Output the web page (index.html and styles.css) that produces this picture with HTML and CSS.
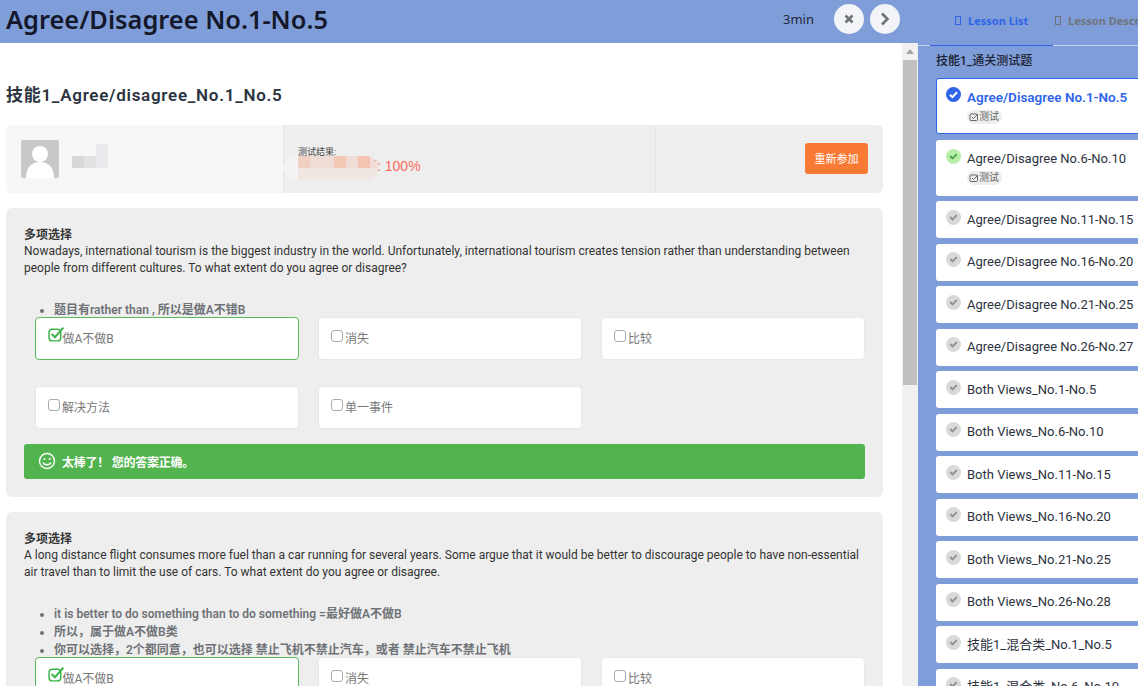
FILE: index.html
```html
<!DOCTYPE html>
<html lang="zh">
<head>
<meta charset="utf-8">
<title>Agree/Disagree No.1-No.5</title>
<link rel="stylesheet" href="styles.css">
</head>
<body>
<div class="app">
  <section class="left">
    <header class="topbar">
      <h1 class="page-title">Agree/Disagree No.1-No.5</h1>
      <span class="timer">3min</span>
      <button class="round-btn"><svg viewBox="0 0 12 12" width="12" height="12"><path d="M2.5 2.5l7 7M9.5 2.5l-7 7" stroke="#6f7378" stroke-width="2.6" fill="none"/></svg></button>
      <button class="round-btn next"><svg viewBox="0 0 12 14" width="12" height="14"><path d="M3 1.5l5.5 5.5L3 12.5" stroke="#6f7378" stroke-width="2.6" fill="none"/></svg></button>
    </header>
    <div class="content-wrap">
      <main class="content">
        <h2 class="lesson-title">技能1_Agree/disagree_No.1_No.5</h2>
        <div class="result">
          <div class="result-user">
            <div class="avatar"><svg viewBox="0 0 38 38" width="38" height="38"><rect width="38" height="38" rx="2" fill="#c8c8c8"/><circle cx="19" cy="14" r="8" fill="#fff"/><path d="M5 38c0-11 6-16 14-16s14 5 14 16z" fill="#fff"/></svg></div>
            <div class="mosaic user-mosaic">
              <i class="m1"></i><i class="m2"></i><i class="m3"></i>
            </div>
          </div>
          <div class="result-score">
            <div class="score-label">测试结果:</div>
            <div class="score-value">正确率: 100%</div>
            <div class="score-mosaic"></div>
          </div>
          <div class="result-action"><button class="retry">重新参加</button></div>
        </div>

        <article class="card first">
          <h3 class="q-type">多项选择</h3>
          <p class="q-text">Nowadays, international tourism is the biggest industry in the world. Unfortunately, international tourism creates tension rather than understanding between people from different cultures. To what extent do you agree or disagree?</p>
          <ul class="notes">
            <li>题目有rather than , 所以是做A不错B</li>
          </ul>
          <div class="options">
            <div class="option correct"><svg class="tick" viewBox="0 0 16 16" width="17" height="17"><rect x="1" y="3" width="11" height="11" rx="3" fill="none" stroke="#3eb54a" stroke-width="1.4"/><path d="M3.5 7.5l3 3L14.5 1.5" fill="none" stroke="#3eb54a" stroke-width="2"/></svg>做A不做B</div>
            <div class="option"><span class="box"></span>消失</div>
            <div class="option"><span class="box"></span>比较</div>
            <div class="option"><span class="box"></span>解决方法</div>
            <div class="option"><span class="box"></span>单一事件</div>
          </div>
          <div class="alert"><svg viewBox="0 0 18 18" width="18" height="18"><circle cx="9" cy="9" r="7.5" fill="none" stroke="#fff" stroke-width="1.4"/><circle cx="6.4" cy="7" r="1" fill="#fff"/><circle cx="11.6" cy="7" r="1" fill="#fff"/><path d="M5 10.5c1 3 7 3 8 0" fill="none" stroke="#fff" stroke-width="1.3"/></svg><span>太棒了！ 您的答案正确。</span></div>
        </article>

        <article class="card">
          <h3 class="q-type">多项选择</h3>
          <p class="q-text">A long distance flight consumes more fuel than a car running for several years. Some argue that it would be better to discourage people to have non-essential air travel than to limit the use of cars. To what extent do you agree or disagree.</p>
          <ul class="notes">
            <li>it is better to do something than to do something =最好做A不做B</li>
            <li>所以，属于做A不做B类</li>
            <li>你可以选择，2个都同意，也可以选择 禁止飞机不禁止汽车，或者 禁止汽车不禁止飞机</li>
          </ul>
          <div class="options">
            <div class="option correct"><svg class="tick" viewBox="0 0 16 16" width="17" height="17"><rect x="1" y="3" width="11" height="11" rx="3" fill="none" stroke="#3eb54a" stroke-width="1.4"/><path d="M3.5 7.5l3 3L14.5 1.5" fill="none" stroke="#3eb54a" stroke-width="2"/></svg>做A不做B</div>
            <div class="option"><span class="box"></span>消失</div>
            <div class="option"><span class="box"></span>比较</div>
          </div>
        </article>
      </main>
      <div class="scrollbar">
        <svg class="arrow" viewBox="0 0 8 5" width="8" height="5"><path d="M4 0l4 5H0z" fill="#a3a3a3"/></svg>
        <div class="thumb"></div>
      </div>
    </div>
  </section>

  <aside class="side">
    <nav class="tabs">
      <a class="tab active"><span class="tofu"></span>Lesson List</a>
      <a class="tab second"><span class="tofu"></span>Lesson Description</a>
    </nav>
    <h4 class="side-title">技能1_通关测试题</h4>
    <ul class="lessons">
      <li class="lesson current tall"><span class="dot blue"><svg viewBox="0 0 16 16" width="16" height="16"><path d="M4.2 8.2l2.6 2.6 5-5.2" fill="none" stroke="#fff" stroke-width="2.2"/></svg></span><div><div class="name">Agree/Disagree No.1-No.5</div><span class="tag"><svg viewBox="0 0 10 10" width="10" height="10"><rect x="1" y="2" width="7.5" height="6.5" rx="1" fill="none" stroke="#666" stroke-width="1"/><path d="M3 5l1.5 1.5L9 2" fill="none" stroke="#666" stroke-width="1"/></svg>测试</span></div></li>
      <li class="lesson tall"><span class="dot green"><svg viewBox="0 0 16 16" width="16" height="16"><path d="M4.5 7.5l2.5 2.5 4.5-4.5" fill="none" stroke="#4fa34f" stroke-width="2"/></svg></span><div><div class="name">Agree/Disagree No.6-No.10</div><span class="tag"><svg viewBox="0 0 10 10" width="10" height="10"><rect x="1" y="2" width="7.5" height="6.5" rx="1" fill="none" stroke="#666" stroke-width="1"/><path d="M3 5l1.5 1.5L9 2" fill="none" stroke="#666" stroke-width="1"/></svg>测试</span></div></li>
      <li class="lesson"><span class="dot grey"><svg viewBox="0 0 16 16" width="16" height="16"><path d="M4.5 7.5l2.5 2.5 4.5-4.5" fill="none" stroke="#8f8f8f" stroke-width="2"/></svg></span><div class="name">Agree/Disagree No.11-No.15</div></li>
      <li class="lesson"><span class="dot grey"><svg viewBox="0 0 16 16" width="16" height="16"><path d="M4.5 7.5l2.5 2.5 4.5-4.5" fill="none" stroke="#8f8f8f" stroke-width="2"/></svg></span><div class="name">Agree/Disagree No.16-No.20</div></li>
      <li class="lesson"><span class="dot grey"><svg viewBox="0 0 16 16" width="16" height="16"><path d="M4.5 7.5l2.5 2.5 4.5-4.5" fill="none" stroke="#8f8f8f" stroke-width="2"/></svg></span><div class="name">Agree/Disagree No.21-No.25</div></li>
      <li class="lesson"><span class="dot grey"><svg viewBox="0 0 16 16" width="16" height="16"><path d="M4.5 7.5l2.5 2.5 4.5-4.5" fill="none" stroke="#8f8f8f" stroke-width="2"/></svg></span><div class="name">Agree/Disagree No.26-No.27</div></li>
      <li class="lesson"><span class="dot grey"><svg viewBox="0 0 16 16" width="16" height="16"><path d="M4.5 7.5l2.5 2.5 4.5-4.5" fill="none" stroke="#8f8f8f" stroke-width="2"/></svg></span><div class="name">Both Views_No.1-No.5</div></li>
      <li class="lesson"><span class="dot grey"><svg viewBox="0 0 16 16" width="16" height="16"><path d="M4.5 7.5l2.5 2.5 4.5-4.5" fill="none" stroke="#8f8f8f" stroke-width="2"/></svg></span><div class="name">Both Views_No.6-No.10</div></li>
      <li class="lesson"><span class="dot grey"><svg viewBox="0 0 16 16" width="16" height="16"><path d="M4.5 7.5l2.5 2.5 4.5-4.5" fill="none" stroke="#8f8f8f" stroke-width="2"/></svg></span><div class="name">Both Views_No.11-No.15</div></li>
      <li class="lesson"><span class="dot grey"><svg viewBox="0 0 16 16" width="16" height="16"><path d="M4.5 7.5l2.5 2.5 4.5-4.5" fill="none" stroke="#8f8f8f" stroke-width="2"/></svg></span><div class="name">Both Views_No.16-No.20</div></li>
      <li class="lesson"><span class="dot grey"><svg viewBox="0 0 16 16" width="16" height="16"><path d="M4.5 7.5l2.5 2.5 4.5-4.5" fill="none" stroke="#8f8f8f" stroke-width="2"/></svg></span><div class="name">Both Views_No.21-No.25</div></li>
      <li class="lesson"><span class="dot grey"><svg viewBox="0 0 16 16" width="16" height="16"><path d="M4.5 7.5l2.5 2.5 4.5-4.5" fill="none" stroke="#8f8f8f" stroke-width="2"/></svg></span><div class="name">Both Views_No.26-No.28</div></li>
      <li class="lesson"><span class="dot grey"><svg viewBox="0 0 16 16" width="16" height="16"><path d="M4.5 7.5l2.5 2.5 4.5-4.5" fill="none" stroke="#8f8f8f" stroke-width="2"/></svg></span><div class="name">技能1_混合类_No.1_No.5</div></li>
      <li class="lesson"><span class="dot grey"><svg viewBox="0 0 16 16" width="16" height="16"><path d="M4.5 7.5l2.5 2.5 4.5-4.5" fill="none" stroke="#8f8f8f" stroke-width="2"/></svg></span><div class="name">技能1_混合类_No.6_No.10</div></li>
    </ul>
  </aside>
</div>
</body>
</html>
```
FILE: styles.css
```css
* { box-sizing: border-box; }
html, body { margin: 0; height: 100%; overflow: hidden; }
body {
  font-family: Roboto, "Noto Sans CJK SC", sans-serif;
  font-size: 12px;
  color: #363636;
  background: #fff;
}
.app { display: flex; width: 1138px; height: 686px; overflow: hidden; }

.left { width: 918px; flex: none; display: flex; flex-direction: column; }
.topbar {
  height: 43px; flex: none; background: #7f9ed9;
  display: flex; align-items: center; padding: 0 18px 5px 6px;
}
.page-title { margin: 0; flex: 1; font-family: "Noto Sans", sans-serif; font-size: 25.4px; font-weight: 600; color: #14182a; line-height: 38px; }
.timer { font-family: "Noto Sans", sans-serif; font-size: 13px; color: #22283a; margin-right: 20px; }
.round-btn {
  width: 30px; height: 30px; border: 0; border-radius: 50%; background: #f2f4f7;
  display: flex; align-items: center; justify-content: center; padding: 0;
}
.round-btn.next { margin-left: 6px; }

.content-wrap { flex: 1; display: flex; min-height: 0; }
.content { flex: 1; min-width: 0; overflow: hidden; padding: 0 19px 0 6px; }
.scrollbar { width: 16px; flex: none; background: #f1f1f1; display: flex; flex-direction: column; align-items: center; }
.arrow { margin-top: 6px; }
.thumb { width: 14px; height: 325px; margin-top: 6px; background: #c0c0c0; }

.lesson-title { margin: 40px 0 18px; font-size: 17px; letter-spacing: 0.72px; font-weight: 600; line-height: 24px; color: #2b3340; }

.result { display: flex; height: 68px; border-radius: 6px; overflow: hidden; background: #eee; }
.result-user { width: 278px; flex: none; background: #f7f7f7; display: flex; padding: 15px; gap: 13px; position: relative; border-right: 1px solid #e4e4e4; }
.avatar { width: 38px; height: 38px; }
.mosaic { position: relative; width: 38px; height: 24px; margin-top: 4px; }
.mosaic i { position: absolute; display: block; }
.m1 { left: 0; top: 12px; width: 12px; height: 12px; background: #d8d8d8; }
.m2 { left: 12px; top: 12px; width: 12px; height: 12px; background: #e2e2e2; }
.m3 { left: 24px; top: 0; width: 12px; height: 24px; background: #eaebee; }
.result-score { width: 372px; flex: none; padding: 22px 0 0 14px; position: relative; border-right: 1px solid #e6e6e6; }
.score-label { font-size: 9px; line-height: 11px; color: #444; }
.score-value { font-family: "Liberation Sans", "Noto Sans CJK SC", sans-serif; font-size: 14px; line-height: 18px; color: #ff6a5c; margin: -1px 0 0 37px; }
.score-mosaic {
  position: absolute; left: 14px; top: 31px; width: 80px; height: 24px; border-radius: 0 12px 12px 0;
  background:
    linear-gradient(#f1cfc2, #f1cfc2) 0 0/12px 12px no-repeat,
    linear-gradient(#f3c8b5, #f3c8b5) 36px 0/12px 12px no-repeat,
    linear-gradient(#f3c5b0, #f3c5b0) 60px 0/12px 12px no-repeat,
    linear-gradient(to bottom, #f0dcd4 50%, #f0e6e2 50%);
}
.score-mosaic::before {
  content: ""; position: absolute; left: -15px; top: 0; width: 15px; height: 24px;
  border-radius: 12px 0 0 12px; background: #f3f3f3;
}
.result-action { flex: 1; display: flex; justify-content: flex-end; align-items: center; padding: 0 15px 2px 0; }
.retry { width: 63px; height: 31px; border: 0; border-radius: 3px; background: #f97a35; color: #fff; font: 11px "Noto Sans CJK SC", sans-serif; padding: 0; }

.card { background: #eee; border-radius: 6px; padding: 19px 18px 18px; margin-top: 15px; }
.q-type { margin: 0; font-size: 12px; line-height: 16px; font-weight: 600; color: #363636; }
.q-text { margin: 0; font-size: 12px; line-height: 17px; color: #333; }
.notes { margin: 24px 0 0; padding: 0 0 0 30px; font-size: 12px; line-height: 18px; font-weight: 600; color: #6f7276; }
.options {
  display: grid; grid-template-columns: repeat(3, 264px); column-gap: 19px; row-gap: 26px;
  padding: 0 0 0 11px; margin-top: -2px;
}
.option {
  height: 43px; background: #fff; border: 1px solid #e8e8e8; border-radius: 4px;
  display: flex; align-items: center; padding: 0 11.5px 2px; font-size: 12px; color: #777;
}
.option.correct { border-color: #5cb85c; }
.tick { flex: none; margin: -6px -2.5px 0 0.5px; }
.box { width: 12px; height: 12px; flex: none; border: 1px solid #aaa; border-radius: 3px; background: #fff; margin-top: -3px; margin-right: 2.5px; }
.alert {
  height: 35px; margin-top: 15px; background: #52b44e; border-radius: 3px; color: #fff;
  display: flex; align-items: center; gap: 6px; padding: 0 14px 1px; font-size: 12px; font-weight: 600; letter-spacing: -0.25px;
}

.side { flex: 1; min-width: 0; background: #7f9ed9; display: flex; flex-direction: column; }
.tabs { height: 46px; flex: none; display: flex; padding: 0 0 0 12px; border-bottom: 1px solid #c5d3ee; white-space: nowrap; }
.tab { display: flex; align-items: center; gap: 7px; width: 123px; height: 46px; flex: none; padding: 0 0 4px 25px; font-family: "Noto Sans", sans-serif; font-size: 11px; font-weight: 700; color: #70747c; }
.tab.active { color: #2f64e8; border-bottom: 1px solid #2f64e8; }
.tab.second { padding: 0 0 5px 2px; width: 150px; }
.tofu { width: 6px; height: 9px; border: 1px solid currentColor; flex: none; }
.side-title { margin: 7px 0 9px 18px; font-size: 12px; line-height: 16px; font-weight: 500; color: #1c2130; }
.lessons { list-style: none; margin: 0; padding: 0 0 0 18px; width: 240px; }
.lesson {
  height: 37px; background: #fff; border-radius: 3px 0 0 3px; margin-bottom: 5.5px; display: flex; gap: 6px;
  padding: 7.7px 0 0 10px; white-space: nowrap; font-size: 13px; color: #2c3240;
}
.lesson.tall { height: 56px; padding-top: 8px; }
.lesson.current { border: 1px solid #2f64e8; padding: 8px 0 0 9px; }
.lesson.current .name { color: #2f64e8; font-weight: 600; font-size: 13.5px; line-height: 21px; }
.lesson.current .tag { margin-top: 2px; }
.lesson.current .dot { margin-top: 0; }
.name { line-height: 22px; }
.dot { width: 15px; height: 15px; border-radius: 50%; flex: none; display: flex; align-items: center; justify-content: center; margin-top: 1px; }
.dot svg { width: 15px; height: 15px; }
.dot.blue { background: #2f64e8; }
.dot.green { background: #b8eea8; }
.dot.grey { background: #d9d9d9; }
.tag { display: inline-flex; align-items: center; height: 14px; margin-top: 1px; padding: 0 3px 0 2px; border-radius: 7px; background: #eee; font-size: 10px; color: #666; line-height: 14px; }
```
